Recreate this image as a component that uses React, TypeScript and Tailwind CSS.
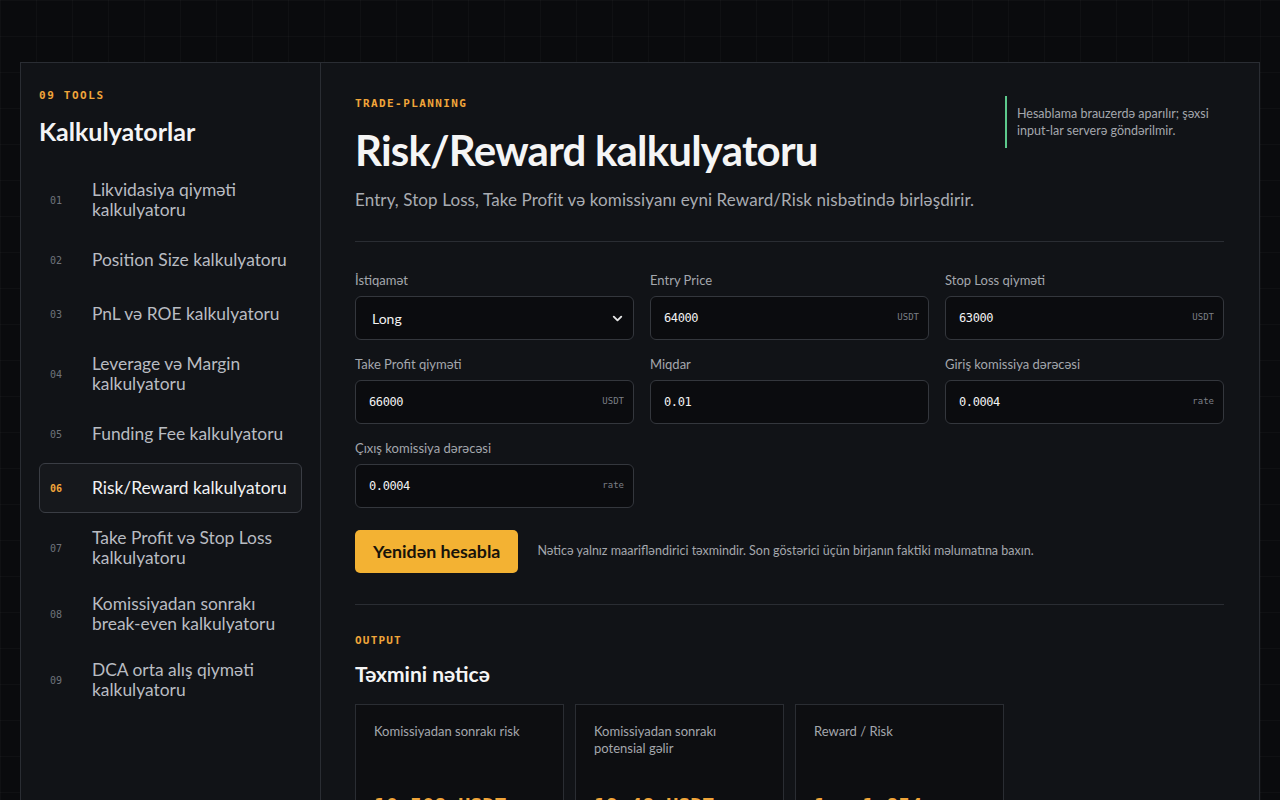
import { ChevronDown } from "lucide-react";

const tools = [
  { no: "01", name: "Likvidasiya qiyməti kalkulyatoru" },
  { no: "02", name: "Position Size kalkulyatoru" },
  { no: "03", name: "PnL və ROE kalkulyatoru" },
  { no: "04", name: "Leverage və Margin kalkulyatoru" },
  { no: "05", name: "Funding Fee kalkulyatoru" },
  { no: "06", name: "Risk/Reward kalkulyatoru", active: true },
  { no: "07", name: "Take Profit və Stop Loss kalkulyatoru" },
  { no: "08", name: "Komissiyadan sonrakı break-even kalkulyatoru" },
  { no: "09", name: "DCA orta alış qiyməti kalkulyatoru" },
];

const fields = [
  { label: "Entry Price", value: "64000", unit: "USDT" },
  { label: "Stop Loss qiyməti", value: "63000", unit: "USDT" },
  { label: "Take Profit qiyməti", value: "66000", unit: "USDT" },
  { label: "Miqdar", value: "0.01", unit: "" },
  { label: "Giriş komissiya dərəcəsi", value: "0.0004", unit: "rate" },
  { label: "Çıxış komissiya dərəcəsi", value: "0.0004", unit: "rate" },
];

const results = [
  { label: "Komissiyadan sonrakı risk", value: "10.508 USDT" },
  { label: "Komissiyadan sonrakı potensial gəlir", value: "19.48 USDT" },
  { label: "Reward / Risk", value: "1 : 1.854" },
];

const mono = "font-['DejaVu_Sans_Mono','Liberation_Mono',monospace]";

const Sidebar = () => (
  <aside className="w-[300px] shrink-0 border-r border-[#2a2d33] px-[18px] pt-[25px] pb-10">
    <div className={`${mono} text-[11px] leading-4 font-bold tracking-[1.6px] text-[#f0a53a]`}>
      09 TOOLS
    </div>
    <h2 className="mt-[11px] text-[25px] leading-8 font-bold text-[#f4f4f5]">
      Kalkulyatorlar
    </h2>
    <nav className="mt-[22px] flex flex-col gap-1">
      {tools.map((t) => (
        <a
          key={t.no}
          className={`flex min-h-[50px] items-center rounded-md border py-[10px] pl-[10px] pr-3 ${
            t.active
              ? "border-[#3a3d44] bg-[#16181c] text-[#f1f1f2]"
              : "border-transparent text-[#b9bcc2]"
          }`}
        >
          <span
            className={`${mono} w-[42px] shrink-0 text-[10px] ${
              t.active ? "font-bold text-[#f0a53a]" : "text-[#6f737b]"
            }`}
          >
            {t.no}
          </span>
          <span className="text-[17.4px] leading-5">{t.name}</span>
        </a>
      ))}
    </nav>
  </aside>
);

const Field = ({ label, value, unit }: { label: string; value: string; unit: string }) => (
  <label className="flex flex-col">
    <span className="text-[13px] leading-[18px] text-[#a4a7ad]">{label}</span>
    <div className="mt-[7px] flex h-11 items-center rounded-md border border-[#34373d] bg-[#0b0c0f] pl-[13px] pr-[9px]">
      <span className={`${mono} flex-1 text-[12px] tracking-[-0.4px] text-[#f2f2f2]`}>{value}</span>
      {unit && <span className={`${mono} text-[9px] text-[#7b7f86]`}>{unit}</span>}
    </div>
  </label>
);

export default function App() {
  return (
    <div className="min-h-screen bg-[#0a0b0d] bg-[linear-gradient(to_right,rgba(255,255,255,0.025)_1px,transparent_1px),linear-gradient(to_bottom,rgba(255,255,255,0.025)_1px,transparent_1px)] bg-[size:36px_36px] px-5 pt-[62px] font-['Lato','Noto_Sans',sans-serif]">
      <div className="flex border border-[#2a2d33] bg-[#111317]">
        <Sidebar />
        <main className="flex-1 pl-[34px] pr-[35px] pt-[33px] pb-10">
          <div className="flex items-start justify-between">
            <div>
              <div className={`${mono} text-[11px] leading-4 font-bold tracking-[1.4px] text-[#f0a53a]`}>
                TRADE-PLANNING
              </div>
              <h1 className="mt-[14px] text-[42px] leading-[48px] font-bold tracking-[-0.8px] text-[#f5f5f5]">
                Risk/Reward kalkulyatoru
              </h1>
              <p className="mt-[13px] text-[17px] leading-[26px] tracking-[0.1px] text-[#a9acb2]">
                Entry, Stop Loss, Take Profit və komissiyanı eyni Reward/Risk nisbətində birləşdirir.
              </p>
            </div>
            <div className="w-[219px] border-l-2 border-[#5cc98c] py-[9px] pl-[10px] text-[12.5px] leading-[17px] text-[#a4a7ad]">
              Hesablama brauzerdə aparılır; şəxsi input-lar serverə göndərilmir.
            </div>
          </div>

          <div className="mt-[28px] border-t border-[#2a2d33] pt-[29px]">
            <div className="grid grid-cols-3 gap-x-4 gap-y-[15px]">
              <label className="flex flex-col">
                <span className="text-[13px] leading-[18px] text-[#a4a7ad]">İstiqamət</span>
                <div className="mt-[7px] flex h-11 items-center justify-between rounded-md border border-[#34373d] bg-[#0b0c0f] pl-[16px] pr-[8px]">
                  <span className="text-[14px] text-[#f2f2f2]">Long</span>
                  <ChevronDown size={15} strokeWidth={3} className="text-[#e5e5e5]" />
                </div>
              </label>
              {fields.map((f) => (
                <Field key={f.label} {...f} />
              ))}
            </div>

            <div className="mt-[22px] flex items-center gap-[19px]">
              <button className="h-[43px] rounded-[5px] bg-[#f3b233] px-[18px] text-[17.8px] font-bold text-[#17130a]">
                Yenidən hesabla
              </button>
              <span className="text-[12.5px] text-[#a4a7ad]">
                Nəticə yalnız maarifləndirici təxmindir. Son göstərici üçün birjanın faktiki məlumatına baxın.
              </span>
            </div>
          </div>

          <div className="mt-[31px] border-t border-[#2a2d33] pt-[28px]">
            <div className={`${mono} text-[11px] leading-4 font-bold tracking-[1.2px] text-[#f0a53a]`}>
              OUTPUT
            </div>
            <h3 className="mt-[11px] text-[21px] leading-7 font-bold text-[#f5f5f5]">Təxmini nəticə</h3>
            <div className="mt-[16px] grid grid-cols-4 gap-[11px]">
              {results.map((r) => (
                <div key={r.label} className="border border-[#2a2d33] bg-[#0d0e11] px-[18px] pt-[18px] pb-6">
                  <div className="min-h-[42px] text-[13px] leading-[17px] text-[#a4a7ad]">{r.label}</div>
                  <div className={`${mono} mt-[26px] text-[20px] leading-7 font-bold text-[#f0a53a]`}>
                    {r.value}
                  </div>
                </div>
              ))}
            </div>
          </div>
        </main>
      </div>
    </div>
  );
}
